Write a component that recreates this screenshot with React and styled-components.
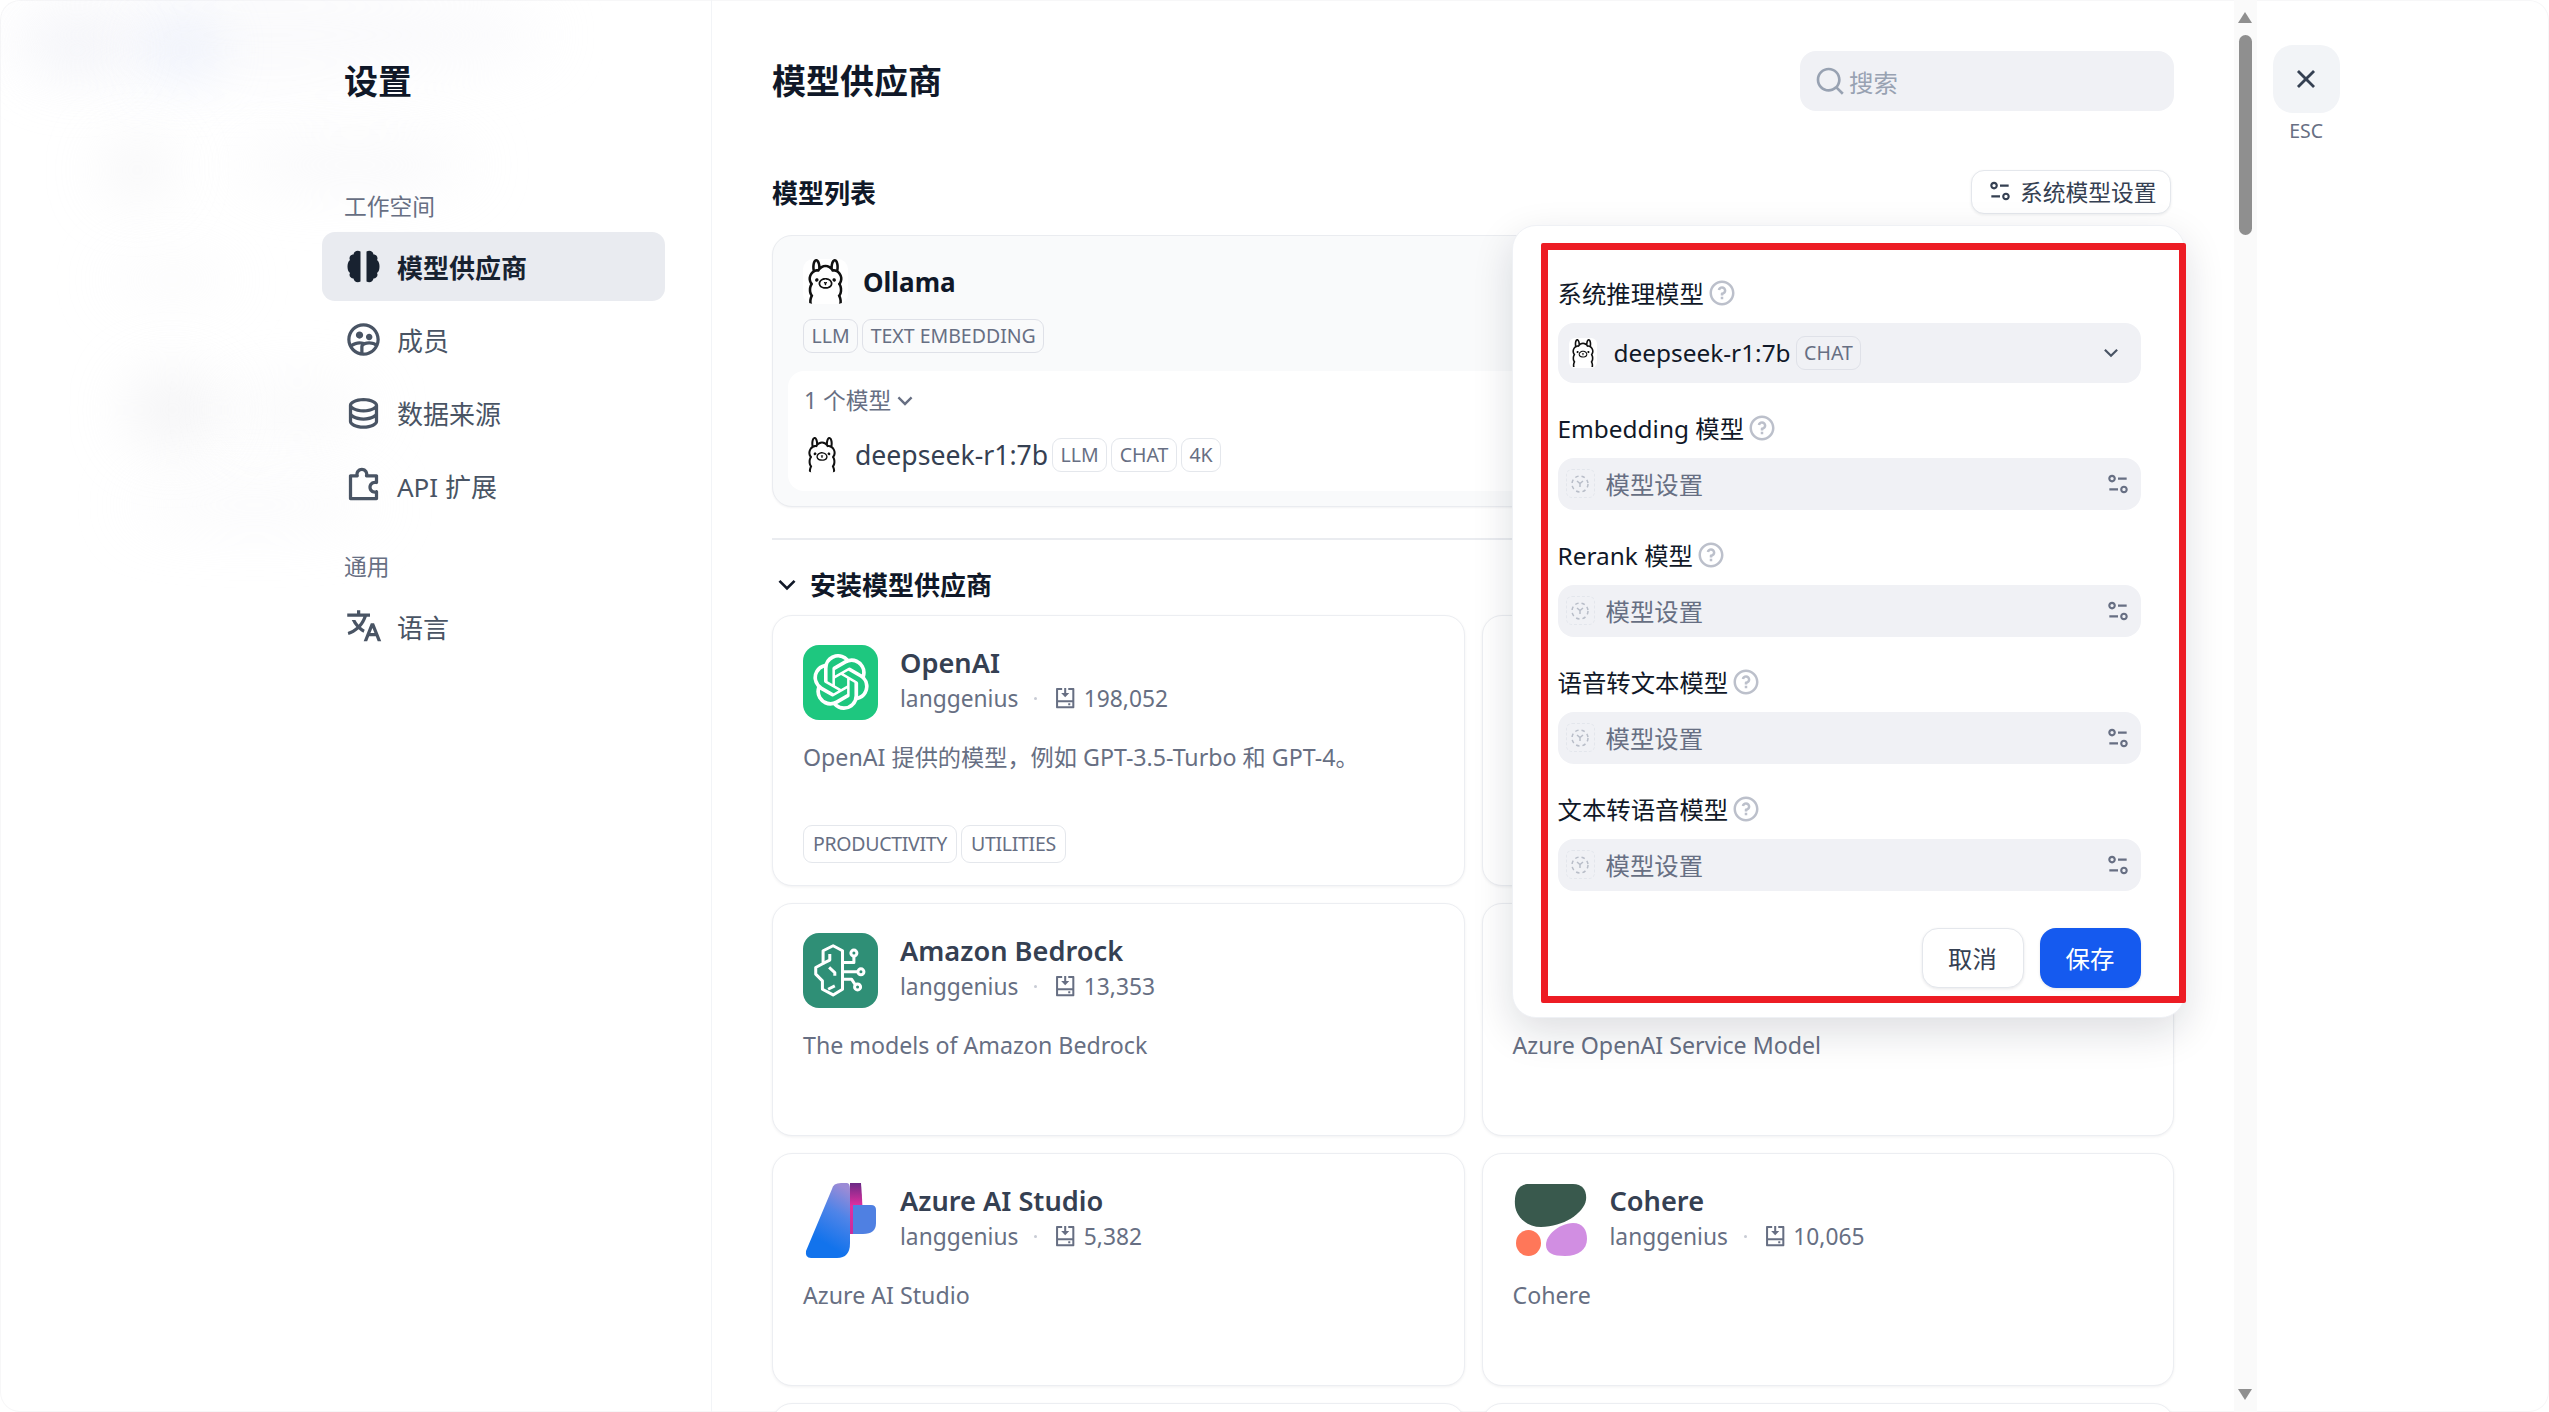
import React from 'react';
import styled, { createGlobalStyle } from 'styled-components';
import {
  RiGroup2Line,
  RiDatabase2Line,
  RiPuzzle2Line,
  RiTranslate2,
  RiCloseLine,
  RiSearchLine,
  RiEqualizer2Line,
  RiArrowDownSLine,
  RiQuestionLine,
  RiInstallLine,
} from 'react-icons/ri';
import { SiOpenai, SiOllama } from 'react-icons/si';

const GlobalStyle = createGlobalStyle`
  * { box-sizing: border-box; }
  html, body { margin: 0; padding: 0; background: #fff; }
  body {
    font-family: "Noto Sans", "Noto Sans CJK SC", sans-serif;
    color: #101828;
    overflow: hidden;
  }
`;

// --- Page frame ---
const Shell = styled.div`
  position: relative;
  display: flex;
  width: 100vw;
  height: 100vh;
  overflow: hidden;
  border-radius: 20px;
  box-shadow: inset 0 0 0 1px #f7f7f8;
  background: #fff;
`;

const Blob = styled.span`
  position: absolute;
  left: ${(p) => p.$x}px;
  top: ${(p) => p.$y}px;
  width: ${(p) => p.$w}px;
  height: ${(p) => p.$h}px;
  border-radius: 50%;
  background: ${(p) => p.$c};
  filter: blur(30px);
`;

// --- Sidebar ---
const Sidebar = styled.aside`
  position: relative;
  flex: 0 0 712px;
  padding: 57px 46px 0 322px;
  border-right: 1.6px solid #f2f4f7;
`;

const SideTitle = styled.h1`
  margin: 0 0 0 22px;
  font-size: 34px;
  line-height: 48px;
  font-weight: 700;
  color: #101828;
`;

const GroupLabel = styled.div`
  margin: ${(p) => p.$top}px 0 7px 22px;
  padding-top: 1px;
  font-size: 22.75px;
  line-height: 36px;
  color: #676f83;
`;

const NavList = styled.nav`
  display: flex;
  flex-direction: column;
  gap: 4px;
`;

const NavItem = styled.a`
  display: flex;
  align-items: center;
  gap: 14px;
  height: 69px;
  padding-left: 22px;
  border-radius: 13px;
  font-size: 26px;
  font-weight: ${(p) => (p.$active ? 700 : 400)};
  color: ${(p) => (p.$active ? '#182230' : '#495464')};
  background: ${(p) => (p.$active ? '#e9ebf0' : 'transparent')};

  svg { flex: none; font-size: 39px; }
`;

// --- Main column ---
const Main = styled.main`
  position: relative;
  flex: 0 0 1522px;
  padding: 51px 60px 0;
  overflow: hidden;
`;

const PageHeader = styled.header`
  display: flex;
  align-items: center;
  justify-content: space-between;
  height: 60px;
`;

const PageTitle = styled.h2`
  margin: 0;
  font-size: 34px;
  line-height: 48px;
  font-weight: 700;
  color: #101828;
`;

const SearchBox = styled.div`
  display: flex;
  align-items: center;
  gap: 3px;
  width: 374px;
  height: 60px;
  padding-left: 14px;
  border-radius: 16px;
  background: #f0f1f5;
  font-size: 24.4px;
  color: #98a2b2;

  svg { font-size: 32px; }
`;

const SectionHeader = styled.div`
  display: flex;
  align-items: center;
  justify-content: space-between;
  height: 44px;
  margin: 59px 0 21px;
`;

const SectionTitle = styled.h3`
  display: flex;
  align-items: center;
  gap: 7px;
  margin: 0;
  padding-top: ${(p) => p.$nudge || 0}px;
  font-size: 26px;
  line-height: 36px;
  font-weight: 700;
  color: #101828;

  svg { font-size: 32px; margin-left: -1px; }
`;

const OutlineButton = styled.button`
  display: flex;
  align-items: center;
  gap: 7px;
  width: 200px;
  height: 44px;
  margin-right: 3px;
  padding: 0 0 2px 15px;
  border: 1.6px solid #e4e7ec;
  border-radius: 13px;
  background: #fff;
  box-shadow: 0 1px 3px rgba(16, 24, 40, 0.08);
  font: inherit;
  font-size: 22.75px;
  color: #354052;

  svg { font-size: 26px; }
`;

// --- Ollama (configured provider) ---
const ConfiguredCard = styled.section`
  height: 272px;
  padding: 23px 15px 0;
  border: 1.6px solid #eaecf0;
  border-radius: 20px;
  background: #f9fafb;
  box-shadow: 0 1px 2px rgba(16, 24, 40, 0.05);
`;

const ConfiguredHead = styled.div`
  display: flex;
  align-items: center;
  gap: 15px;
  padding-left: 15px;
  font-size: 26px;
  line-height: 36px;
  font-weight: 700;
  color: #101828;
`;

const LogoBox = styled.span`
  display: flex;
  flex: none;
  align-items: center;
  justify-content: center;
  width: ${(p) => p.$size}px;
  height: ${(p) => p.$size}px;
  border-radius: 10px;
  background: #fff;
  color: #111;
  overflow: hidden;

  svg { font-size: ${(p) => p.$size}px; }
`;

const TagRow = styled.div`
  display: flex;
  gap: 4px;
  margin: ${(p) => p.$top || 0}px 0 0 ${(p) => p.$left || 0}px;
`;

const Tag = styled.span`
  display: inline-flex;
  align-items: center;
  height: ${(p) => p.$h || 34}px;
  padding: 0 ${(p) => (p.$h ? 9 : 7.5)}px;
  border: 1.6px solid ${(p) => (p.$plain ? '#dfe1e8' : '#e4e7ec')};
  border-radius: 9px;
  background: ${(p) => (p.$plain ? 'transparent' : '#fff')};
  font-size: 19.5px;
  letter-spacing: ${(p) => (p.$h ? -0.3 : 0)}px;
  line-height: 1;
  color: #676f83;
  white-space: nowrap;
`;

const ModelPanel = styled.div`
  height: 120px;
  margin-top: 18px;
  padding: 12px 16px 0;
  border-radius: 16px;
  background: #fff;
`;

const ModelCount = styled.div`
  display: flex;
  align-items: center;
  font-size: 22.75px;
  line-height: 36px;
  color: #676f83;

  svg { font-size: 28px; }
`;

const ModelRow = styled.div`
  display: flex;
  align-items: center;
  gap: 4px;
  margin-top: 18px;
  height: 36px;
  font-size: 26.6px;
  color: #354052;

  > span:first-child { margin-right: 11px; }
`;

const Divider = styled.hr`
  height: 1.6px;
  margin: 31px 0 27px;
  border: 0;
  background: #eaecf0;
`;

// --- Marketplace cards ---
const CardGrid = styled.div`
  display: grid;
  grid-template-columns: repeat(2, 1fr);
  gap: 17px;
  margin-top: 12px;
`;

const ProviderCard = styled.article`
  display: flex;
  flex-direction: column;
  min-height: 233px;
  padding: 29px 30px 22px;
  border: 1.6px solid #eceef2;
  border-radius: 20px;
  background: #fff;
  box-shadow: 0 1px 3px rgba(16, 24, 40, 0.06);
`;

const CardHead = styled.div`
  display: flex;
  gap: 22px;
`;

const IconTile = styled.span`
  display: flex;
  flex: none;
  align-items: center;
  justify-content: center;
  width: 75px;
  height: 75px;
  border-radius: 16px;
  background: ${(p) => p.$bg || 'transparent'};
  color: #fff;

  svg { display: block; }
`;

const CardName = styled.div`
  font-size: 27.2px;
  line-height: 36px;
  font-weight: 600;
  color: #354052;
`;

const CardSub = styled.div`
  display: flex;
  align-items: center;
  margin-top: 2px;
  font-size: 22.75px;
  line-height: 32px;
  color: #676f83;

  svg { font-size: 24.4px; margin-right: 6px; }
`;

const MiddleDot = styled.i`
  width: 3px;
  height: 3px;
  margin: 0 16px;
  border-radius: 50%;
  background: #c8ccd5;
`;

const CardDesc = styled.p`
  margin: 19px 0 0;
  min-height: ${(p) => (p.$tall ? 73 : 36)}px;
  font-size: 23.2px;
  line-height: 36px;
  color: #676f83;
`;

// --- System model popover ---
const Popover = styled.div`
  position: absolute;
  left: 800px;
  top: 225px;
  width: 673px;
  height: 793px;
  padding: 48.5px 44.5px 0;
  border: 1.6px solid #eff1f5;
  border-radius: 24px;
  background: #fff;
  box-shadow: 0 14px 40px rgba(16, 24, 40, 0.14);
`;

const RedFrame = styled.div`
  position: absolute;
  left: 28px;
  top: 17px;
  width: 645px;
  height: 760px;
  border: 7.5px solid #ed1c24;
  border-radius: 2px;
  pointer-events: none;
`;

const FieldLabel = styled.label`
  display: flex;
  align-items: center;
  gap: 3px;
  height: 36px;
  margin: ${(p) => (p.$first ? 0 : 27)}px 0 12px;
  font-size: 24.4px;
  color: #101828;

  svg { font-size: 30px; color: #bcc0cb; }
`;

const FieldBox = styled.div`
  display: flex;
  align-items: center;
  width: 583px;
  height: ${(p) => p.$h}px;
  padding: 0 10px 0 8px;
  border-radius: 16px;
  background: #f0f1f5;
  font-size: 24.4px;
`;

const SelectedLogo = styled.span`
  display: flex;
  flex: none;
  align-items: center;
  justify-content: center;
  width: 28px;
  height: 30px;
  margin: 0 17px 0 3px;
  border-radius: 6px;
  background: #fff;
  color: #111;
  overflow: hidden;

  svg { font-size: 32px; }
`;

const SelectedName = styled.span`
  margin-right: 5px;
  color: #101828;
`;

const EmptyModelIcon = styled.span`
  display: flex;
  flex: none;
  align-items: center;
  justify-content: center;
  width: 29px;
  height: 29px;
  margin-right: 11px;
  border: 1.6px dashed #e3e6ec;
  border-radius: 6px;
  color: #b8bdc8;
`;

const Placeholder = styled.span`
  color: #676f83;
`;

const FieldEnd = styled.span`
  display: flex;
  margin-left: auto;
  margin-right: ${(p) => (p.$dim ? 0 : 7)}px;
  color: ${(p) => (p.$dim ? '#676f83' : '#495464')};
  font-size: 26px;
`;

const PopoverActions = styled.div`
  display: flex;
  justify-content: flex-end;
  gap: 16px;
  width: 583px;
  margin-top: 37px;
`;

const ActionButton = styled.button`
  width: ${(p) => (p.$primary ? 101 : 102)}px;
  height: 60px;
  padding: 0;
  border: ${(p) => (p.$primary ? '0' : '1.6px solid #e4e7ec')};
  border-radius: 16px;
  background: ${(p) => (p.$primary ? '#155aef' : '#fff')};
  box-shadow: 0 1px 3px rgba(16, 24, 40, 0.1);
  font: inherit;
  font-size: 24.4px;
  color: ${(p) => (p.$primary ? '#fff' : '#354052')};
`;

// --- Scroll rail and close ---
const ScrollRail = styled.div`
  display: flex;
  flex: 0 0 23px;
  flex-direction: column;
  align-items: flex-start;
  padding: 12px 0 12px 4px;
  background: #fafafa;
`;

const RailArrow = styled.span`
  width: 0;
  height: 0;
  border-left: 7.5px solid transparent;
  border-right: 7.5px solid transparent;
  ${(p) => (p.$down ? 'border-top' : 'border-bottom')}: 11px solid #8f8f8f;
  ${(p) => p.$down && 'margin-top: auto;'}
`;

const RailThumb = styled.span`
  width: 13px;
  height: 200px;
  margin: 12px 0 0 1px;
  border-radius: 6.5px;
  background: #8f8f8f;
`;

const CloseColumn = styled.div`
  display: flex;
  flex-direction: column;
  align-items: center;
  width: 67px;
  margin: 45px 0 0 15.6px;
`;

const CloseButton = styled.button`
  display: flex;
  align-items: center;
  justify-content: center;
  width: 67px;
  height: 68px;
  padding: 0;
  border: 0;
  border-radius: 20px;
  background: #f2f4f7;
  color: #354052;
  font-size: 34px;
`;

const EscHint = styled.span`
  margin-top: 6px;
  font-size: 19.5px;
  line-height: 24px;
  color: #676f83;
`;

// --- Drawn logos ---
const BrainIcon = () => (
  <svg width="1em" height="1em" viewBox="-3.5 -3.5 39 39" fill="#182230">
    <path d="M13 1C10-.5 6.500.5 6 4 3 4 1 7 2.500 9.500.5 11 0 13.500 0 16c0 2.500.5 5 2.500 6.500C1 25 3 28 6 28c.5 3.500 4 4.500 7 3z" />
    <path d="M19 1c3-1.500 6.500-.5 7 3 3 0 5 3 3.500 5.500 2 1.500 2.500 4 2.500 6.500 0 2.500-.5 5-2.500 6.500C31 25 29 28 26 28c-.5 3.500-4 4.500-7 3z" />
  </svg>
);

const BedrockLogo = () => (
  <svg width="75" height="75" viewBox="0 0 224 224" fill="none" stroke="#fff" strokeWidth="9" strokeLinejoin="round">
    <path d="M90 38 60 53v38L38 103v20l20 20v25l32 17 28-17V53z" />
    <path d="M80 63v18L60 91M78 103l17 15v10M75 168l20-10" />
    <path d="M118 88h34V68M118 116h45M118 138h27l10 15" />
    <circle cx="152" cy="60" r="9" />
    <circle cx="173" cy="116" r="9" />
    <circle cx="163" cy="161" r="9" />
  </svg>
);

const AzureStudioLogo = () => (
  <svg width="75" height="75" viewBox="0 0 75 75">
    <defs>
      <linearGradient id="azureMain" x1="0.7" y1="0" x2="0.35" y2="1">
        <stop offset="0" stopColor="#9b8bd6" />
        <stop offset="0.35" stopColor="#4f84e8" />
        <stop offset="0.8" stopColor="#1273ec" />
      </linearGradient>
      <linearGradient id="azurePink" x1="0" y1="0" x2="0" y2="1">
        <stop offset="0" stopColor="#6b2a86" />
        <stop offset="0.45" stopColor="#e22fa0" />
        <stop offset="1" stopColor="#c72c9c" />
      </linearGradient>
    </defs>
    <path d="M47 0 H58 Q60 24 60 51 H47z" fill="url(#azurePink)" />
    <path d="M50 22 H68 Q73 22 73 27 V40 Q73 51 60 51 H50z" fill="#4f80e2" />
    <path d="M29 6 Q30 0 38 0 H44 Q47 0 47 6 V60 Q47 75 34 75 H8 Q2 75 3 68z" fill="url(#azureMain)" />
  </svg>
);

const CohereLogo = () => (
  <svg width="75" height="75" viewBox="0 0 75 75">
    <path d="M14 1 H60 C70 1 74 8 73 17 C71 30 50 44 28 44 C14 44 3 34 2 22 C1 10 5 2 14 1z" fill="#39594d" />
    <ellipse cx="15.500" cy="60" rx="12.500" ry="13" fill="#ff7759" />
    <path d="M33 62C33 52 45 41 60 40c10 0 14 7 14 16 0 10-8 17-22 17-12 0-19-3-19-11z" fill="#d18ee2" />
  </svg>
);

const EmptyModelGlyph = () => (
  <svg width="20" height="20" viewBox="0 0 20 20" fill="none" stroke="currentColor" strokeWidth="1.5">
    <circle cx="10" cy="10" r="8" strokeDasharray="3.5 3" />
    <path d="M7 7l3 2.5L13 7M10 9.5V13" />
  </svg>
);

// --- Data ---
const blobs = [
  { x: -10, y: -10, w: 560, h: 90, c: 'rgba(240,242,246,.35)' },
  { x: 30, y: 25, w: 95, h: 50, c: 'rgba(226,230,240,.35)' },
  { x: 155, y: 25, w: 55, h: 50, c: 'rgba(215,226,252,.6)' },
  { x: 105, y: 145, w: 65, h: 50, c: 'rgba(226,226,230,.4)' },
  { x: 235, y: 145, w: 240, h: 40, c: 'rgba(238,238,241,.45)' },
  { x: 110, y: 265, w: 125, h: 30, c: 'rgba(240,240,243,.4)' },
  { x: 130, y: 375, w: 85, h: 70, c: 'rgba(226,226,230,.45)' },
  { x: 225, y: 385, w: 145, h: 50, c: 'rgba(240,240,243,.4)' },
  { x: 130, y: 490, w: 250, h: 30, c: 'rgba(242,242,245,.5)' },
];

const providers = [
  { name: 'OpenAI', count: '198,052', desc: 'OpenAI 提供的模型，例如 GPT-3.5-Turbo 和 GPT-4。', tags: ['PRODUCTIVITY', 'UTILITIES'], tile: '#1ec77f', logo: <SiOpenai size={56} /> },
  {},
  { name: 'Amazon Bedrock', count: '13,353', desc: 'The models of Amazon Bedrock', tile: '#2f8f76', logo: <BedrockLogo /> },
  { desc: 'Azure OpenAI Service Model' },
  { name: 'Azure AI Studio', count: '5,382', desc: 'Azure AI Studio', logo: <AzureStudioLogo /> },
  { name: 'Cohere', count: '10,065', desc: 'Cohere', logo: <CohereLogo /> },
  {},
  {},
];

const fields = ['Embedding 模型', 'Rerank 模型', '语音转文本模型', '文本转语音模型'];

const App = () => (
  <Shell>
    <GlobalStyle />
    {blobs.map((b) => (
      <Blob key={`${b.x}-${b.y}`} $x={b.x} $y={b.y} $w={b.w} $h={b.h} $c={b.c} />
    ))}

    <Sidebar>
      <SideTitle>设置</SideTitle>
      <GroupLabel $top={83}>工作空间</GroupLabel>
      <NavList>
        <NavItem $active><BrainIcon />模型供应商</NavItem>
        <NavItem><RiGroup2Line />成员</NavItem>
        <NavItem><RiDatabase2Line />数据来源</NavItem>
        <NavItem><RiPuzzle2Line />API 扩展</NavItem>
      </NavList>
      <GroupLabel $top={28}>通用</GroupLabel>
      <NavList>
        <NavItem><RiTranslate2 />语言</NavItem>
      </NavList>
    </Sidebar>

    <Main>
      <PageHeader>
        <PageTitle>模型供应商</PageTitle>
        <SearchBox><RiSearchLine />搜索</SearchBox>
      </PageHeader>

      <SectionHeader>
        <SectionTitle $nudge={2}>模型列表</SectionTitle>
        <OutlineButton><RiEqualizer2Line />系统模型设置</OutlineButton>
      </SectionHeader>

      <ConfiguredCard>
        <ConfiguredHead>
          <LogoBox $size={45}><SiOllama /></LogoBox>
          Ollama
        </ConfiguredHead>
        <TagRow $top={15} $left={15}>
          <Tag $plain>LLM</Tag>
          <Tag $plain>TEXT EMBEDDING</Tag>
        </TagRow>
        <ModelPanel>
          <ModelCount>1 个模型<RiArrowDownSLine /></ModelCount>
          <ModelRow>
            <LogoBox $size={36}><SiOllama /></LogoBox>
            deepseek-r1:7b
            <Tag>LLM</Tag>
            <Tag>CHAT</Tag>
            <Tag>4K</Tag>
          </ModelRow>
        </ModelPanel>
      </ConfiguredCard>

      <Divider />

      <SectionTitle><RiArrowDownSLine />安装模型供应商</SectionTitle>

      <CardGrid>
        {providers.map((p, i) => (
          <ProviderCard key={i}>
            {p.desc && (
              <CardHead>
                <IconTile $bg={p.tile}>{p.logo}</IconTile>
                {p.name && (
                  <div>
                    <CardName>{p.name}</CardName>
                    <CardSub>
                      langgenius
                      <MiddleDot />
                      <RiInstallLine />
                      {p.count}
                    </CardSub>
                  </div>
                )}
              </CardHead>
            )}
            {p.desc && <CardDesc $tall={Boolean(p.tags)}>{p.desc}</CardDesc>}
            {p.tags && (
              <TagRow $top={13}>
                {p.tags.map((t) => <Tag key={t} $h={38}>{t}</Tag>)}
              </TagRow>
            )}
          </ProviderCard>
        ))}
      </CardGrid>

      <Popover>
        <RedFrame />
        <FieldLabel $first>系统推理模型 <RiQuestionLine /></FieldLabel>
        <FieldBox $h={60}>
          <SelectedLogo><SiOllama /></SelectedLogo>
          <SelectedName>deepseek-r1:7b</SelectedName>
          <Tag $plain>CHAT</Tag>
          <FieldEnd><RiArrowDownSLine /></FieldEnd>
        </FieldBox>
        {fields.map((label) => (
          <React.Fragment key={label}>
            <FieldLabel>{label} <RiQuestionLine /></FieldLabel>
            <FieldBox $h={52}>
              <EmptyModelIcon><EmptyModelGlyph /></EmptyModelIcon>
              <Placeholder>模型设置</Placeholder>
              <FieldEnd $dim><RiEqualizer2Line /></FieldEnd>
            </FieldBox>
          </React.Fragment>
        ))}
        <PopoverActions>
          <ActionButton>取消</ActionButton>
          <ActionButton $primary>保存</ActionButton>
        </PopoverActions>
      </Popover>
    </Main>

    <ScrollRail>
      <RailArrow />
      <RailThumb />
      <RailArrow $down />
    </ScrollRail>

    <CloseColumn>
      <CloseButton><RiCloseLine /></CloseButton>
      <EscHint>ESC</EscHint>
    </CloseColumn>
  </Shell>
);

export default App;
